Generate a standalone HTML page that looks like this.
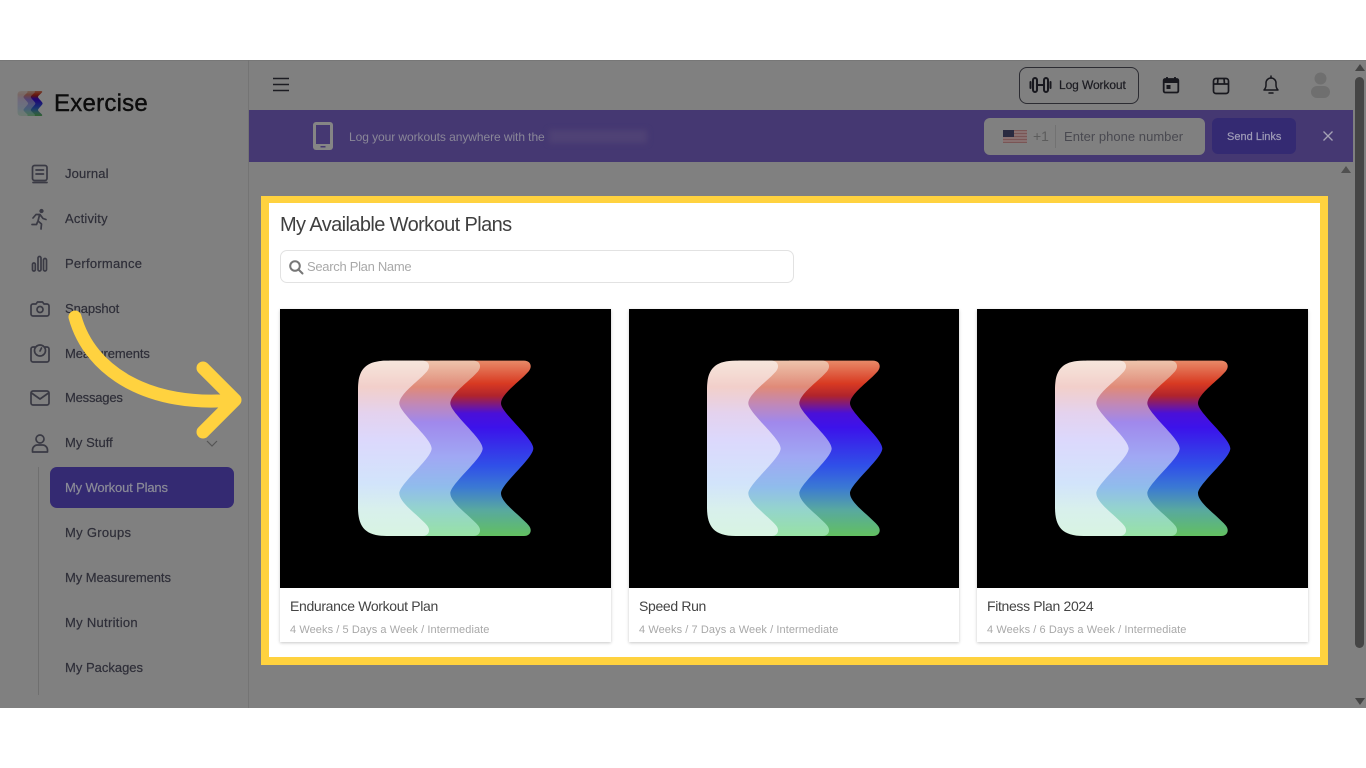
<!DOCTYPE html>
<html><head><meta charset="utf-8"><style>
html,body{margin:0;padding:0;background:#fff}
body{width:1366px;height:768px;position:relative;overflow:hidden;font-family:"Liberation Sans",sans-serif}
.a{position:absolute}
.t{position:absolute;white-space:nowrap;line-height:20px;font-size:13px;color:#2e2e38}
.s{-webkit-text-stroke:.2px currentColor}
svg{position:absolute;overflow:visible}
.ic{fill:none;stroke:#3a3a44;stroke-width:1.7;stroke-linecap:round;stroke-linejoin:round}
.card{position:absolute;top:309px;width:331px;height:333px;background:#fff;box-shadow:0 1px 3px rgba(0,0,0,.22)}
.img{position:absolute;left:0;top:0;width:331px;height:279px;background:#000}
.nm{position:absolute;left:10px;top:287px;font-size:14px;line-height:20px;color:#444;letter-spacing:-.34px;white-space:nowrap}
.sb{position:absolute;left:10px;top:313px;font-size:11px;line-height:16px;color:#a8a8a8;letter-spacing:.08px;white-space:nowrap}
</style></head><body>
<div class="a" style="left:0;top:60px;width:1366px;height:648px;background:#808080"></div>
<div class="a" style="left:0;top:60px;width:1366px;height:1px;background:#777"></div>
<div class="a" style="left:248px;top:60px;width:1px;height:648px;background:#747474"></div>

<!-- logo -->
<svg width="30" height="30" viewBox="0 0 630 630" style="left:15.400px;top:88px;filter:brightness(.5)"><use href="#lg"/></svg>
<div class="t" style="left:54px;top:90px;font-size:24px;line-height:28px;color:#0c0c0c;letter-spacing:.25px;-webkit-text-stroke:.4px #0c0c0c">Exercise</div>

<!-- sidebar icons -->
<svg class="ic" width="24" height="24" style="left:28px;top:162px"><rect x="4.500" y="3.500" width="14.500" height="15" rx="2"/><path d="M5 20.500h14M8 8h7.500M8 12h7.500"/></svg>
<svg class="ic" width="24" height="24" style="left:28px;top:207px"><circle cx="13.500" cy="4" r="1.300" fill="#3a3a44"/><path d="M5 11l3-3.500h4l3 4 3 1M11.500 8l-1.500 6 3.500 3-.5 5M9.500 15l-1 2.500H4"/></svg>
<svg class="ic" width="24" height="24" style="left:28px;top:252px"><rect x="4.500" y="11" width="2.800" height="8" rx="1.400"/><rect x="10" y="4.500" width="3" height="14.500" rx="1.500"/><rect x="15.500" y="6.500" width="3" height="12.500" rx="1.500"/></svg>
<svg class="ic" width="24" height="24" style="left:28px;top:297px"><path d="M5 7h3l1.500-2h5L16 7h3a2 2 0 0 1 2 2v8a2 2 0 0 1-2 2H5a2 2 0 0 1-2-2V9a2 2 0 0 1 2-2z"/><circle cx="12" cy="12.500" r="3"/></svg>
<svg class="ic" width="24" height="24" style="left:28px;top:342px"><path d="M7 5H5a2 2 0 0 0-2 2v11a2 2 0 0 0 2 2h14a2 2 0 0 0 2-2V7a2 2 0 0 0-2-2h-2"/><circle cx="12" cy="8.500" r="5.500"/><path d="M12 9l1.500-3"/></svg>
<svg class="ic" width="24" height="24" style="left:28px;top:386px"><rect x="3" y="5" width="18" height="14" rx="2"/><path d="M3.500 7l8.500 6 8.500-6"/></svg>
<svg class="ic" width="24" height="24" style="left:28px;top:431px"><circle cx="12" cy="8" r="4"/><path d="M4.500 21v-2a5 5 0 0 1 5-5h5a5 5 0 0 1 5 5v2z"/></svg>
<svg width="12" height="8" style="left:206px;top:440px"><path d="M1 1l5 5 5-5" fill="none" stroke="#555" stroke-width="1.200"/></svg>

<div class="t s" style="left:65px;top:164px;letter-spacing:.14px">Journal</div>
<div class="t s" style="left:65px;top:209px;letter-spacing:.2px">Activity</div>
<div class="t s" style="left:65px;top:254px;letter-spacing:.25px">Performance</div>
<div class="t s" style="left:65px;top:299px;letter-spacing:-.1px">Snapshot</div>
<div class="t s" style="left:65px;top:344px;letter-spacing:-.1px">Measurements</div>
<div class="t s" style="left:65px;top:388px;letter-spacing:-.2px">Messages</div>
<div class="t s" style="left:65px;top:433px;letter-spacing:.05px">My Stuff</div>

<div class="a" style="left:38px;top:467px;width:1px;height:228px;background:#6f6f6f"></div>
<div class="a" style="left:50px;top:467px;width:184px;height:41px;background:#342a72;border-radius:7px"></div>
<div class="t s" style="left:65px;top:478px;color:#8b8b98;letter-spacing:-.15px">My Workout Plans</div>
<div class="t s" style="left:65px;top:523px;letter-spacing:.3px">My Groups</div>
<div class="t s" style="left:65px;top:568px;letter-spacing:-.07px">My Measurements</div>
<div class="t s" style="left:65px;top:613px;letter-spacing:.3px">My Nutrition</div>
<div class="t s" style="left:65px;top:658px">My Packages</div>

<!-- top bar -->
<svg width="18" height="16" style="left:272px;top:77px"><path d="M1 1.500h16M1 7.500h16M1 13.500h16" stroke="#1c1c22" stroke-width="1.600" fill="none"/></svg>
<div class="a" style="left:1019px;top:67px;width:118px;height:35px;border:1px solid #2c2c32;border-radius:8px"></div>
<svg width="24" height="20" style="left:1029px;top:75px" fill="none" stroke="#18181e" stroke-width="2" stroke-linecap="round"><rect x="4" y="3" width="4" height="14" rx="2"/><rect x="15" y="3" width="4" height="14" rx="2"/><path d="M8 10h7M1.500 7v6M21.500 7v6"/></svg>
<div class="t s" style="left:1059px;top:75px;font-size:12px;color:#1c1c22;letter-spacing:-.1px">Log Workout</div>
<svg width="20" height="22" style="left:1161px;top:74px"><rect x="2.700" y="5" width="14.600" height="13.500" rx="1.500" fill="none" stroke="#18181e" stroke-width="1.800"/><path d="M3 5h14v4H3z" fill="#18181e"/><path d="M6 3v3M14 3v3" stroke="#18181e" stroke-width="1.800"/><rect x="5.500" y="11" width="4" height="4" fill="#18181e"/></svg>
<svg width="18" height="18" style="left:1212px;top:76.500px" fill="none" stroke="#18181e" stroke-width="1.700" stroke-linejoin="round"><path d="M1.500 7V4a2.500 2.500 0 0 1 2.500-2.500h10A2.500 2.500 0 0 1 16.500 4v10a2.500 2.500 0 0 1-2.500 2.500H4A2.500 2.500 0 0 1 1.500 14zM1.500 7h15M6 1.500L5.500 7M12 1.500l.5 5.500"/></svg>
<svg width="18" height="20" style="left:1262px;top:75px" fill="none" stroke="#18181e" stroke-width="1.500" stroke-linejoin="round"><path d="M2 15c1.500-1.500 2-3 2-5V8a5 5 0 0 1 10 0v2c0 2 .5 3.500 2 5z"/><path d="M9 1v2M7 18h4" stroke-linecap="round"/></svg>
<svg width="22" height="26" style="left:1310px;top:72px" fill="#6f6f6f"><circle cx="10.500" cy="6.500" r="6"/><rect x="1" y="14" width="19" height="12" rx="6"/></svg>

<!-- banner -->
<div class="a" style="left:249px;top:110px;width:1104px;height:52px;background:#453872"></div>
<svg width="22" height="30" style="left:313px;top:121px"><rect x="0" y="1" width="20" height="28" rx="3" fill="#858585"/><rect x="3" y="4" width="14" height="19" fill="#453872"/><rect x="7.500" y="25" width="5" height="1.500" fill="#453872"/></svg>
<div class="t" style="left:349px;top:127px;font-size:12px;color:#8a8798;letter-spacing:-.07px">Log your workouts anywhere with the</div>
<div class="a" style="left:549px;top:130px;width:98px;height:13px;background:#4f4275;filter:blur(3px)"></div>
<div class="a" style="left:984px;top:118px;width:221px;height:37px;background:#808080;border-radius:6px"></div>
<svg width="24" height="13" style="left:1003px;top:130px"><rect width="24" height="13" fill="#7a5555"/><path d="M0 2h24M0 5h24M0 8h24M0 11h24" stroke="#958a8a" stroke-width="1"/><rect width="11" height="7" fill="#2a2a40"/></svg>
<div class="t" style="left:1033px;top:126px;font-size:14px;color:#5c5c5c">+1</div>
<div class="a" style="left:1055px;top:125px;width:1px;height:23px;background:#727272"></div>
<div class="t" style="left:1064px;top:127px;font-size:13px;color:#494950;letter-spacing:.03px">Enter phone number</div>
<div class="a" style="left:1212px;top:118px;width:84px;height:36px;background:#342a72;border-radius:6px"></div>
<div class="t s" style="left:1227px;top:127px;font-size:11px;color:#a09db8">Send Links</div>
<svg width="12" height="12" style="left:1322px;top:130px"><path d="M1.500 1.500l9 9M10.500 1.500l-9 9" stroke="#a5a2b5" stroke-width="1.300"/></svg>

<!-- scrollbars -->
<div class="a" style="left:1355px;top:77px;width:9px;height:571px;background:#454545;border-radius:5px"></div>
<svg width="12" height="8" style="left:1354px;top:64px"><path d="M6 0l5 7H1z" fill="#444"/></svg>
<svg width="12" height="8" style="left:1354px;top:698px"><path d="M1 0h10L6 7z" fill="#444"/></svg>
<svg width="12" height="8" style="left:1340px;top:166px"><path d="M6 0l5 7H1z" fill="#505050"/></svg>

<!-- highlighted panel -->
<div class="a" style="left:261px;top:196px;width:1051px;height:454px;background:#fff;border:8px solid #ffd23f;border-top-width:7px"></div>
<div class="t" style="left:280px;top:213px;font-size:20px;line-height:25px;color:#3f3f3f;letter-spacing:-.6px">My Available Workout Plans</div>
<div class="a" style="left:280px;top:250px;width:512px;height:31px;border:1px solid #e2e2e2;border-radius:7px;background:#fff"></div>
<svg width="16" height="16" style="left:288px;top:259px" fill="none" stroke="#777" stroke-width="2"><circle cx="7" cy="7" r="4.800"/><path d="M10.500 10.500l4 4" stroke-linecap="round"/></svg>
<div class="t" style="left:307px;top:257px;font-size:13px;color:#a9a9a9;letter-spacing:-.3px">Search Plan Name</div>

<div class="card" style="left:280px">
 <div class="img"><svg width="210" height="210" viewBox="0 0 630 630" style="left:60px;top:31px"><use href="#lg"/></svg></div>
 <div class="nm">Endurance Workout Plan</div><div class="sb">4 Weeks / 5 Days a Week / Intermediate</div>
</div>
<div class="card" style="left:629px;width:330px">
 <div class="img" style="width:330px"><svg width="210" height="210" viewBox="0 0 630 630" style="left:60px;top:31px"><use href="#lg"/></svg></div>
 <div class="nm">Speed Run</div><div class="sb">4 Weeks / 7 Days a Week / Intermediate</div>
</div>
<div class="card" style="left:977px">
 <div class="img"><svg width="210" height="210" viewBox="0 0 630 630" style="left:60px;top:31px"><use href="#lg"/></svg></div>
 <div class="nm">Fitness Plan 2024</div><div class="sb">4 Weeks / 6 Days a Week / Intermediate</div>
</div>

<!-- arrow -->
<svg width="1366" height="768" style="left:0;top:0" fill="none" stroke="#ffd23f" stroke-width="13" stroke-linecap="round" stroke-linejoin="round"><path d="M75 317C90 372 150 408 234 400M203 368L235 400L203 432"/></svg>

<!-- logo defs -->
<svg width="0" height="0" style="left:0;top:0">
<defs>
<linearGradient id="g1" x1="0" y1="62" x2="0" y2="588" gradientUnits="userSpaceOnUse">
<stop offset="0" stop-color="#e88a68"/><stop offset=".13" stop-color="#d83a22"/><stop offset=".2" stop-color="#b0242c"/><stop offset=".3" stop-color="#4a10d8"/><stop offset=".38" stop-color="#3c12ea"/><stop offset=".6" stop-color="#3050e8"/><stop offset=".72" stop-color="#3a78d4"/><stop offset=".85" stop-color="#58a8a0"/><stop offset="1" stop-color="#62c060"/>
</linearGradient>
<linearGradient id="g2" x1="0" y1="62" x2="0" y2="588" gradientUnits="userSpaceOnUse">
<stop offset="0" stop-color="#eec4ac"/><stop offset=".15" stop-color="#e08a78"/><stop offset=".25" stop-color="#c088b8"/><stop offset=".35" stop-color="#a088ec"/><stop offset=".55" stop-color="#a0a8f4"/><stop offset=".72" stop-color="#90bcec"/><stop offset=".85" stop-color="#94d4cc"/><stop offset="1" stop-color="#98e2a4"/>
</linearGradient>
<linearGradient id="g3" x1="0" y1="62" x2="0" y2="588" gradientUnits="userSpaceOnUse">
<stop offset="0" stop-color="#f6e6dc"/><stop offset=".15" stop-color="#f2cfca"/><stop offset=".3" stop-color="#e4d2ee"/><stop offset=".45" stop-color="#dcd8fc"/><stop offset=".7" stop-color="#d2e4fb"/><stop offset=".85" stop-color="#d8f0ec"/><stop offset="1" stop-color="#d8f4e2"/>
</linearGradient>
<g id="lg">
<path fill="url(#g1)" d="M300 62H552C572 62 578 80 566 94C540 124 483 162 483 190C483 218 580 295 580 325C580 355 483 432 483 460C483 488 540 526 566 556C578 570 572 588 552 588H300z"/>
<path fill="url(#g2)" transform="translate(-152 0)" d="M300 62H552C572 62 578 80 566 94C540 124 483 162 483 190C483 218 580 295 580 325C580 355 483 432 483 460C483 488 540 526 566 556C578 570 572 588 552 588H300z"/>
<path fill="url(#g3)" transform="translate(-305 0)" d="M445 62H552C572 62 578 80 566 94C540 124 483 162 483 190C483 218 580 295 580 325C580 355 483 432 483 460C483 488 540 526 566 556C578 570 572 588 552 588H445C380 588 359 560 359 502V148C359 90 380 62 445 62z"/>
</g>
</defs>
</svg>
</body></html>
